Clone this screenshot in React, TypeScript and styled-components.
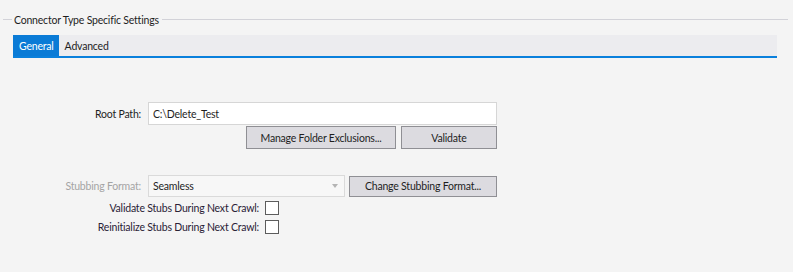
import React from "react";
import styled, { createGlobalStyle } from "styled-components";

const GlobalStyle = createGlobalStyle`
  html, body {
    margin: 0;
    padding: 0;
    background-color: #f4f4f4;
  }
  body {
    font-family: Lato, "Noto Sans", sans-serif;
    font-size: 10.5px;
    letter-spacing: -0.2px;
    color: #1e1e1e;
  }
`;

const App = () => {
  return (
    <>
      <GlobalStyle />
      <Page>
        <GroupHeader>
          <Rule $short />
          <GroupTitle>Connector Type Specific Settings</GroupTitle>
          <Rule />
        </GroupHeader>

        <TabBar>
          <Tab $active>General</Tab>
          <Tab>Advanced</Tab>
        </TabBar>

        <Form>
          <Row $top={44}>
            <Label>Root Path:</Label>
            <TextInput defaultValue="C:\Delete_Test" />
          </Row>
          <ButtonRow>
            <Button $width={150}>Manage Folder Exclusions...</Button>
            <Button $width={96}>Validate</Button>
          </ButtonRow>

          <Row $top={26}>
            <Label $disabled>Stubbing Format:</Label>
            <Select>
              <span>Seamless</span>
              <Caret />
            </Select>
            <Button $width={148} $height={21}>
              Change Stubbing Format...
            </Button>
          </Row>

          <CheckRow $top={4}>
            <CheckLabel>Validate Stubs During Next Crawl:</CheckLabel>
            <CheckBox />
          </CheckRow>
          <CheckRow $top={5}>
            <CheckLabel>Reinitialize Stubs During Next Crawl:</CheckLabel>
            <CheckBox />
          </CheckRow>
        </Form>
      </Page>
    </>
  );
};

export default App;

const Page = styled.div`
  width: 793px;
  height: 272px;
  padding-top: 12px;
  box-sizing: border-box;
`;

const GroupHeader = styled.div`
  display: flex;
  align-items: center;
  height: 15px;
  padding-left: 3px;
  padding-right: 5px;
`;

const Rule = styled.div<{ $short?: boolean }>`
  height: 1px;
  background-color: #d2d2d8;
  flex: ${(p) => (p.$short ? "0 0 9px" : "1 1 auto")};
`;

const GroupTitle = styled.div`
  padding: 0 3px 0 2px;
  color: #1e1e1e;
  white-space: nowrap;
`;

const TabBar = styled.div`
  display: flex;
  margin: 8px 16px 0 13px;
  height: 21px;
  background-color: #ececef;
  border-bottom: 2px solid #0a80dc;
`;

const Tab = styled.div<{ $active?: boolean }>`
  display: flex;
  align-items: center;
  padding: 0 5px 0 6px;
  background-color: ${(p) => (p.$active ? "#0a7bd6" : "transparent")};
  color: ${(p) => (p.$active ? "#ffffff" : "#1e1e1e")};
`;

const Form = styled.div`
  display: flex;
  flex-direction: column;
`;

const Row = styled.div<{ $top: number }>`
  display: flex;
  align-items: center;
  margin-top: ${(p) => p.$top}px;
`;

const Label = styled.div<{ $disabled?: boolean }>`
  width: 141px;
  padding-right: 7px;
  box-sizing: content-box;
  text-align: right;
  color: ${(p) => (p.$disabled ? "#a4a4a4" : "#1e1e1e")};
`;

const TextInput = styled.input`
  width: 349px;
  height: 23px;
  box-sizing: border-box;
  border: 1px solid #d6d6d6;
  background-color: #ffffff;
  padding: 0 4px;
  font-family: Lato, "Noto Sans", sans-serif;
  font-size: 10.5px;
  letter-spacing: -0.2px;
  color: #1e1e1e;
  outline: none;
`;

const ButtonRow = styled.div`
  display: flex;
  gap: 5px;
  margin-top: 1px;
  margin-left: 246px;
`;

const Button = styled.div<{ $width: number; $height?: number }>`
  display: flex;
  align-items: center;
  justify-content: center;
  width: ${(p) => p.$width}px;
  height: ${(p) => p.$height ?? 23}px;
  box-sizing: border-box;
  border: 1px solid #8f8f94;
  background-color: #dcdbe0;
  color: #1e1e1e;
`;

const Select = styled.div`
  display: flex;
  align-items: center;
  justify-content: space-between;
  width: 197px;
  height: 22px;
  margin-right: 4px;
  box-sizing: border-box;
  border: 1px solid #dadada;
  background-color: #f7f7f7;
  padding: 0 6px 0 4px;
  color: #1e1e1e;
`;

const Caret = styled.div`
  width: 0;
  height: 0;
  border-left: 3.5px solid transparent;
  border-right: 3.5px solid transparent;
  border-top: 4px solid #b4b4b4;
`;

const CheckRow = styled.div<{ $top: number }>`
  display: flex;
  align-items: center;
  margin-top: ${(p) => p.$top}px;
`;

const CheckLabel = styled.div`
  width: 259px;
  padding-right: 6px;
  text-align: right;
  color: #2a2236;
`;

const CheckBox = styled.div`
  width: 14px;
  height: 14px;
  box-sizing: border-box;
  border: 1px solid #5c5c5c;
  background-color: #ffffff;
`;
